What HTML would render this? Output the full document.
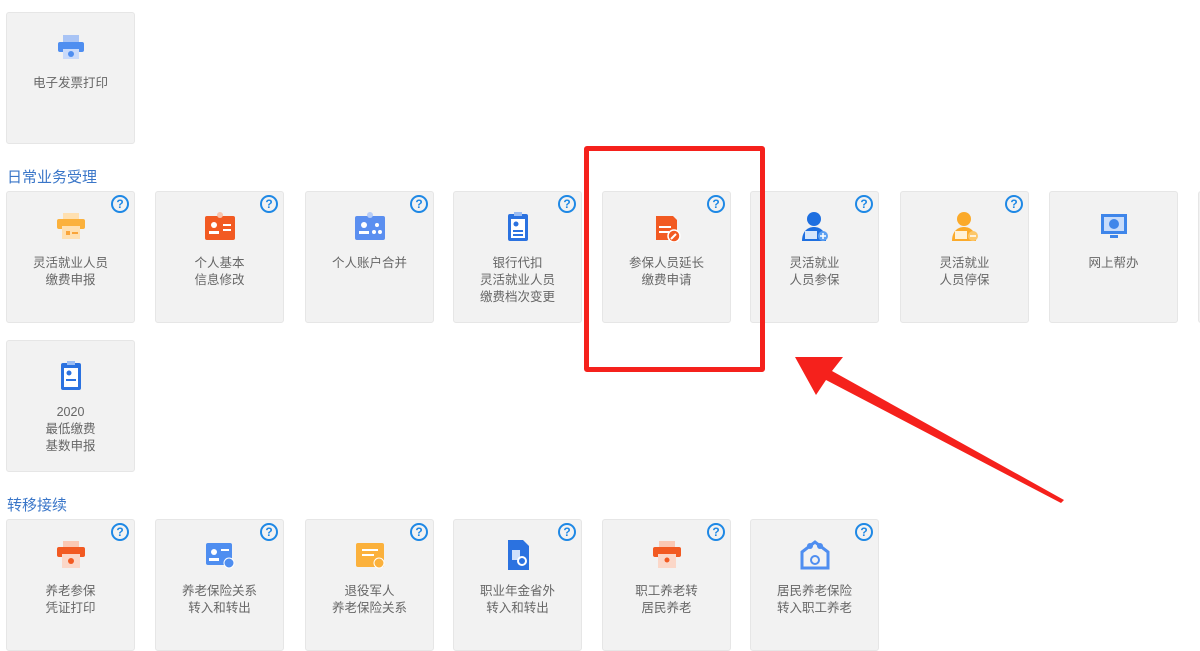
<!DOCTYPE html>
<html><head><meta charset="utf-8"><style>
body{margin:0;width:1200px;height:604px;overflow:hidden;background:#fff;font-family:"Liberation Sans","Noto Sans CJK SC",sans-serif;position:relative}
.c{position:absolute;width:129px;height:132px;background:#f2f2f2;border:1px solid #e6e6e6;border-radius:3px;box-sizing:border-box;text-align:center;font-size:12.5px;color:#666;line-height:17px}
.c .t{position:absolute;top:63px;left:0;right:0}
.c .i{position:absolute;left:48px;top:18px;width:32px;height:32px}
.q{position:absolute;right:5px;top:3px;width:14px;height:14px;border:2px solid #1e88e5;border-radius:50%;color:#1e88e5;font-weight:bold;font-size:12px;line-height:14px;text-align:center}
.h{position:absolute;left:7px;font-size:15px;color:#3a76c8}
</style></head><body>
<div class="c" style="left:6px;top:12px"><svg class="i" viewBox="0 0 32 32"><rect x="8" y="4" width="16" height="8" fill="#a9c4f5"/><rect x="3" y="11" width="26" height="10" rx="2" fill="#4f8ef0"/><rect x="8" y="18" width="16" height="10" fill="#c9dafa"/><circle cx="16" cy="23" r="3" fill="#4f8ef0"/></svg><div class="t" style="top:62px">电子发票打印</div></div>
<div class="h" style="top:166px">日常业务受理</div>

<div class="c" style="left:6px;top:191px"><div class="q">?</div><svg class="i" viewBox="0 0 32 32"><rect x="8" y="3" width="16" height="8" fill="#ffe0b0"/><rect x="2" y="9" width="28" height="10" rx="2" fill="#fbb13c"/><rect x="7" y="16" width="18" height="13" fill="#ffe0b0"/><rect x="11" y="21" width="4" height="4" fill="#f9a53a"/><rect x="17" y="22" width="6" height="2" fill="#f9a53a"/></svg><div class="t">灵活就业人员<br>缴费申报</div></div>
<div class="c" style="left:155px;top:191px"><div class="q">?</div><svg class="i" viewBox="0 0 32 32"><rect x="1" y="6" width="30" height="24" rx="2" fill="#f25a22"/><circle cx="16" cy="5" r="3" fill="#f9c4ad"/><circle cx="10" cy="15" r="3" fill="#fff"/><rect x="5" y="21" width="10" height="3" fill="#fff"/><rect x="19" y="14" width="8" height="2" fill="#fff"/><rect x="19" y="19" width="8" height="2" fill="#fff"/></svg><div class="t">个人基本<br>信息修改</div></div>
<div class="c" style="left:305px;top:191px"><div class="q">?</div><svg class="i" viewBox="0 0 32 32"><rect x="1" y="6" width="30" height="24" rx="2" fill="#5b8ff0"/><circle cx="16" cy="5" r="3" fill="#b7cdf8"/><circle cx="10" cy="15" r="3" fill="#fff"/><rect x="5" y="21" width="10" height="3" fill="#fff"/><circle cx="23" cy="15" r="2" fill="#fff"/><circle cx="20" cy="22" r="2" fill="#fff"/><circle cx="26" cy="22" r="2" fill="#fff"/></svg><div class="t">个人账户合并</div></div>
<div class="c" style="left:453px;top:191px"><div class="q">?</div><svg class="i" viewBox="0 0 32 32"><rect x="6" y="4" width="20" height="27" rx="2" fill="#2b72e0"/><rect x="12" y="2" width="8" height="4" fill="#9bbdf3"/><rect x="9" y="9" width="14" height="19" fill="#fff"/><circle cx="14" cy="14" r="2.5" fill="#2b72e0"/><rect x="11" y="20" width="10" height="2" fill="#2b72e0"/><rect x="11" y="24" width="10" height="2" fill="#2b72e0"/></svg><div class="t">银行代扣<br>灵活就业人员<br>缴费档次变更</div></div>
<div class="c" style="left:602px;top:191px"><div class="q">?</div><svg class="i" viewBox="0 0 32 32"><path d="M5 6h17l4 4v20H5z" fill="#f25a22"/><rect x="8" y="16" width="12" height="2" fill="#fff"/><rect x="8" y="21" width="10" height="2" fill="#fff"/><circle cx="23" cy="26" r="6" fill="#f25a22" stroke="#fff" stroke-width="1.5"/><path d="M20 29l5-5" stroke="#fff" stroke-width="2"/></svg><div class="t">参保人员延长<br>缴费申请</div></div>
<div class="c" style="left:750px;top:191px"><div class="q">?</div><svg class="i" viewBox="0 0 32 32"><circle cx="15" cy="9" r="7" fill="#1e6fe0"/><path d="M3 31c0-10 6-14 12-14s12 4 12 14z" fill="#1e6fe0"/><rect x="6" y="21" width="12" height="8" fill="#d6e6fb"/><circle cx="24" cy="26" r="5" fill="#5ca0f2"/><path d="M24 23v6M21 26h6" stroke="#fff" stroke-width="1.5"/></svg><div class="t">灵活就业<br>人员参保</div></div>
<div class="c" style="left:900px;top:191px"><div class="q">?</div><svg class="i" viewBox="0 0 32 32"><circle cx="15" cy="9" r="7" fill="#fbaa2a"/><path d="M3 31c0-10 6-14 12-14s12 4 12 14z" fill="#fbaa2a"/><rect x="6" y="21" width="12" height="8" fill="#fff1d6"/><circle cx="24" cy="26" r="5" fill="#fcc76a"/><path d="M21 26h6" stroke="#fff" stroke-width="1.5"/></svg><div class="t">灵活就业<br>人员停保</div></div>
<div class="c" style="left:1049px;top:191px"><svg class="i" viewBox="0 0 32 32"><rect x="3" y="4" width="26" height="20" fill="#3f86ea"/><rect x="6" y="7" width="20" height="14" fill="#c8dcfa"/><circle cx="16" cy="14" r="5" fill="#3f86ea"/><rect x="12" y="25" width="8" height="3" fill="#3f86ea"/></svg><div class="t">网上帮办</div></div>
<div class="c" style="left:1198px;top:191px"></div>

<div class="c" style="left:6px;top:340px"><svg class="i" viewBox="0 0 32 32"><rect x="6" y="4" width="20" height="27" rx="2" fill="#2b72e0"/><rect x="12" y="2" width="8" height="4" fill="#9bbdf3"/><rect x="9" y="9" width="14" height="19" fill="#fff"/><circle cx="14" cy="14" r="2.5" fill="#2b72e0"/><rect x="11" y="20" width="10" height="2" fill="#2b72e0"/></svg><div class="t">2020<br>最低缴费<br>基数申报</div></div>
<div class="h" style="top:494px">转移接续</div>

<div class="c" style="left:6px;top:519px"><div class="q">?</div><svg class="i" viewBox="0 0 32 32"><rect x="8" y="3" width="16" height="8" fill="#fbc8b4"/><rect x="2" y="9" width="28" height="10" rx="2" fill="#f25a22"/><rect x="7" y="16" width="18" height="14" fill="#fbd7c8"/><circle cx="16" cy="23" r="3" fill="#f25a22"/></svg><div class="t">养老参保<br>凭证打印</div></div>
<div class="c" style="left:155px;top:519px"><div class="q">?</div><svg class="i" viewBox="0 0 32 32"><rect x="2" y="5" width="26" height="22" rx="2" fill="#4f8ef0"/><circle cx="10" cy="14" r="3" fill="#fff"/><rect x="5" y="20" width="10" height="3" fill="#fff"/><rect x="17" y="11" width="8" height="2" fill="#fff"/><circle cx="25" cy="25" r="5" fill="#4f8ef0" stroke="#fff"/></svg><div class="t">养老保险关系<br>转入和转出</div></div>
<div class="c" style="left:305px;top:519px"><div class="q">?</div><svg class="i" viewBox="0 0 32 32"><rect x="2" y="5" width="28" height="24" rx="2" fill="#fbb13c"/><rect x="8" y="11" width="16" height="2" fill="#fff"/><rect x="8" y="16" width="12" height="2" fill="#fff"/><circle cx="25" cy="25" r="5" fill="#fbb13c" stroke="#fff"/></svg><div class="t">退役军人<br>养老保险关系</div></div>
<div class="c" style="left:453px;top:519px"><div class="q">?</div><svg class="i" viewBox="0 0 32 32"><path d="M6 2h15l6 6v24H6z" fill="#2b72e0"/><rect x="10" y="12" width="8" height="10" fill="#cfe0fb"/><circle cx="20" cy="23" r="5" fill="#fff"/><circle cx="20" cy="23" r="3" fill="#2b72e0"/></svg><div class="t">职业年金省外<br>转入和转出</div></div>
<div class="c" style="left:602px;top:519px"><div class="q">?</div><svg class="i" viewBox="0 0 32 32"><rect x="8" y="3" width="16" height="8" fill="#fbc8b4"/><rect x="2" y="9" width="28" height="10" rx="2" fill="#f25a22"/><rect x="7" y="16" width="18" height="14" fill="#fbd7c8"/><circle cx="16" cy="22" r="2.5" fill="#f25a22"/></svg><div class="t">职工养老转<br>居民养老</div></div>
<div class="c" style="left:750px;top:519px"><div class="q">?</div><svg class="i" viewBox="0 0 32 32"><path d="M3 14l13-10 13 10v16H3z" fill="none" stroke="#4f8ef0" stroke-width="3"/><circle cx="11" cy="8" r="3" fill="#4f8ef0"/><circle cx="21" cy="8" r="3" fill="#4f8ef0"/><circle cx="16" cy="22" r="4" fill="none" stroke="#4f8ef0" stroke-width="2"/></svg><div class="t">居民养老保险<br>转入职工养老</div></div>

<div style="position:absolute;left:584px;top:146px;width:171px;height:216px;border:5px solid #f5211c;border-radius:3px"></div>
<svg style="position:absolute;left:0;top:0" width="1200" height="604"><polygon points="795,357 843,357 832,371 1064,500 1061,503 826,380 816,395" fill="#f5211c"/></svg>
</body></html>
